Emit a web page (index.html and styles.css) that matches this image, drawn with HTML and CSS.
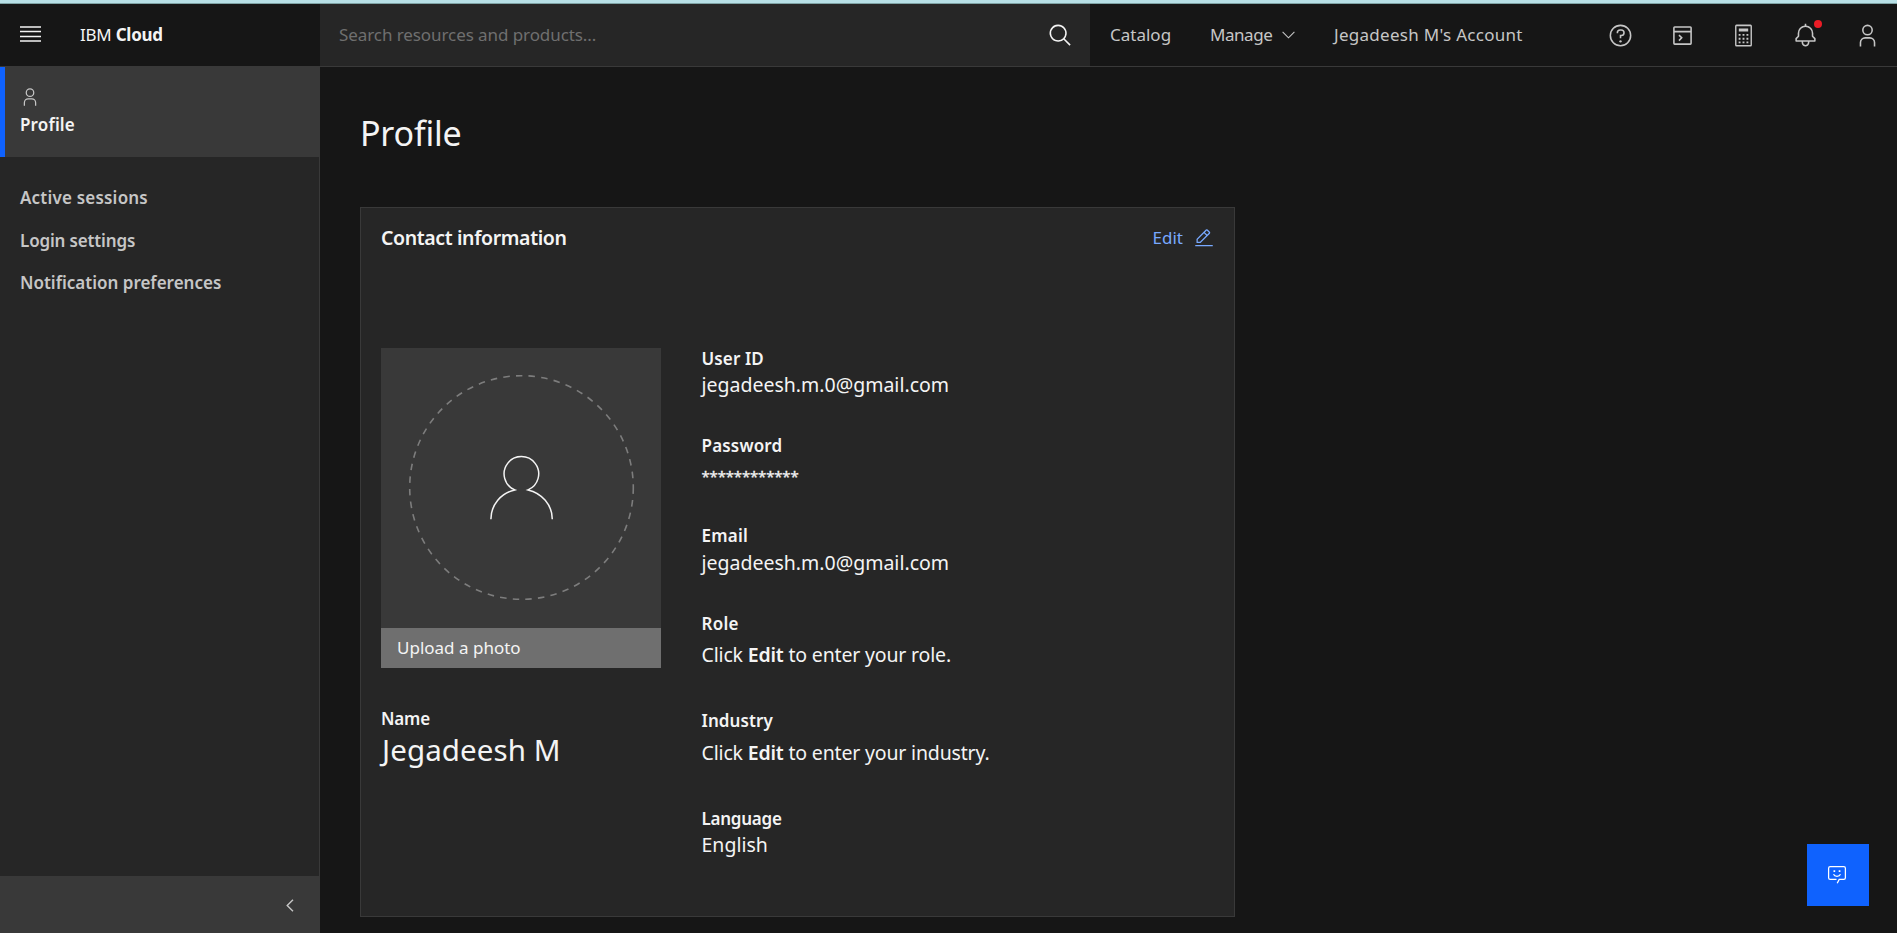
FILE: index.html
```html
<!DOCTYPE html>
<html lang="en">
<head>
<meta charset="utf-8">
<title>Profile - IBM Cloud</title>
<link rel="stylesheet" href="styles.css">
</head>
<body>
<div class="strip"></div>
<header class="header">
  <div class="brand">
    <svg class="menu-icon" width="21" height="16" viewBox="0 0 21 16"><path d="M0 1h21M0 5.500h21M0 10.500h21M0 15h21" stroke="#f4f4f4" stroke-width="1.300"/></svg>
    <span class="brand-name">IBM <b>Cloud</b></span>
  </div>
  <div class="search">
    <span class="search-text">Search resources and products...</span>
    <svg width="25" height="25" viewBox="0 0 32 32" fill="#f4f4f4"><path d="M29 27.586l-7.552-7.552a11.018 11.018 0 1 0-1.414 1.414L27.586 29zM4 13a9 9 0 1 1 9 9 9.010 9.010 0 0 1-9-9z"/></svg>
  </div>
  <nav class="topnav">
    <a class="catalog">Catalog</a>
    <a class="manage">Manage</a>
    <svg class="chev" width="13" height="8" viewBox="0 0 13 8" fill="none" stroke="#c6c6c6" stroke-width="1.100"><path d="M.6.8l5.900 6 5.900-6"/></svg>
    <a class="account">Jegadeesh M's Account</a>
  </nav>
  <div class="tools">
    <svg width="25" height="25" viewBox="0 0 32 32" fill="#c6c6c6"><path d="M16 2a14 14 0 1 0 14 14A14 14 0 0 0 16 2zm0 26a12 12 0 1 1 12-12 12 12 0 0 1-12 12z"/><circle cx="16" cy="23.500" r="1.500"/><path d="M17 8h-1.500a4.490 4.490 0 0 0-4.500 4.500v.5h2v-.5a2.500 2.500 0 0 1 2.500-2.500H17a2.500 2.500 0 0 1 0 5h-2v4.500h2V17a4.500 4.500 0 0 0 0-9z"/></svg>
    <svg width="25" height="25" viewBox="0 0 32 32" fill="#c6c6c6"><path d="M26 4.010H6a2 2 0 0 0-2 2v20a2 2 0 0 0 2 2h20a2 2 0 0 0 2-2v-20a2 2 0 0 0-2-2zm0 2v4H6v-4zm-20 20v-14h20v14z"/><path d="M10.760 16.180l2.820 2.830-2.820 2.830 1.410 1.410 4.240-4.240-4.240-4.240z"/></svg>
    <svg width="25" height="25" viewBox="0 0 32 32" fill="#c6c6c6"><path d="M26 4v24H6V4zm0-2H6a2 2 0 0 0-2 2v24a2 2 0 0 0 2 2h20a2 2 0 0 0 2-2V4a2 2 0 0 0-2-2z" transform="matrix(.9 0 0 1 1.600 0)"/><path d="M10 7h12v4H10zM9.800 14h2.400v2.400H9.800zM14.800 14h2.400v2.400h-2.400zM19.800 14h2.400v2.400h-2.400zM9.800 19h2.400v2.400H9.800zM14.800 19h2.400v2.400h-2.400zM19.800 19h2.400v2.400h-2.400zM9.800 23.600h2.400V26H9.800zM14.800 23.600h2.400V26h-2.400zM19.800 23.600h2.400V26h-2.400z"/></svg>
    <span class="bell">
      <svg width="25" height="25" viewBox="0 0 32 32" fill="#c6c6c6"><path d="M28.707 19.293L26 16.586V13a10.014 10.014 0 0 0-9-9.950V1h-2v2.050A10.014 10.014 0 0 0 6 13v3.586l-2.707 2.707A1 1 0 0 0 3 20v3a1 1 0 0 0 1 1h7v.777a5.152 5.152 0 0 0 4.500 5.199A5.006 5.006 0 0 0 21 25v-1h7a1 1 0 0 0 1-1v-3a1 1 0 0 0-.293-.707zM19 25a3 3 0 0 1-6 0v-1h6zm8-3H5v-1.586l2.707-2.707A1 1 0 0 0 8 17v-4a8 8 0 0 1 16 0v4a1 1 0 0 0 .293.707L27 20.414z"/></svg>
      <i class="dot"></i>
    </span>
    <svg width="25" height="25" viewBox="0 0 32 32" fill="#c6c6c6"><path d="M16 4a5 5 0 1 1-5 5 5 5 0 0 1 5-5m0-2a7 7 0 1 0 7 7 7 7 0 0 0-7-7zM26 30h-2v-5a5 5 0 0 0-5-5h-6a5 5 0 0 0-5 5v5H6v-5a7 7 0 0 1 7-7h6a7 7 0 0 1 7 7z"/></svg>
  </div>
</header>
<div class="shell">
  <aside class="side">
    <div class="side-active">
      <svg width="20" height="20" viewBox="0 0 32 32" fill="#c6c6c6"><path d="M16 4a5 5 0 1 1-5 5 5 5 0 0 1 5-5m0-2a7 7 0 1 0 7 7 7 7 0 0 0-7-7zM26 30h-2v-5a5 5 0 0 0-5-5h-6a5 5 0 0 0-5 5v5H6v-5a7 7 0 0 1 7-7h6a7 7 0 0 1 7 7z"/></svg>
      <span class="side-title">Profile</span>
    </div>
    <nav class="side-links">
      <a class="l1">Active sessions</a>
      <a class="l2">Login settings</a>
      <a class="l3">Notification preferences</a>
    </nav>
    <div class="collapse">
      <svg width="8" height="13" viewBox="0 0 8 13" fill="none" stroke="#c6c6c6" stroke-width="1.400"><path d="M7 .7L1.200 6.500 7 12.300"/></svg>
    </div>
  </aside>
  <main class="main">
    <h1 class="title">Profile</h1>
    <section class="card">
      <div class="card-head">
        <h2 class="card-title">Contact information</h2>
        <a class="edit"><span>Edit</span>
          <svg width="20" height="20" viewBox="0 0 32 32" fill="#78a9ff"><path d="M2 27h28v2H2zM25.410 9a2 2 0 0 0 0-2.830l-3.580-3.580a2 2 0 0 0-2.830 0l-15 15V24h6.410zm-5-5L24 7.590l-3 3L17.410 7zM6 22v-3.590l10-10L19.590 12l-10 10z"/></svg>
        </a>
      </div>
      <div class="card-body">
        <div class="left">
          <div class="photo">
            <svg width="280" height="280" viewBox="0 0 280 280" fill="none"><circle cx="140.500" cy="139.500" r="111.800" stroke="#7d7d7d" stroke-width="1.600" stroke-dasharray="6.500 6.200"/><path d="M109.900 171.200C109.900 156.500 120.200 145 133.800 141.900A17.300 17.300 0 1 1 147 141.900C160.600 145 171.300 156.500 171.300 171.200" stroke="#f4f4f4" stroke-width="1.500"/></svg>
          </div>
          <div class="upload"><span>Upload a photo</span></div>
          <div class="label name">Name</div>
          <div class="fullname">Jegadeesh M</div>
        </div>
        <div class="fields">
          <div class="field f1"><div class="label uid">User ID</div><div class="value mail">jegadeesh.m.0@gmail.com</div></div>
          <div class="field f2"><div class="label pw">Password</div><div class="stars">************</div></div>
          <div class="field f3"><div class="label em">Email</div><div class="value mail">jegadeesh.m.0@gmail.com</div></div>
          <div class="field f4"><div class="label role">Role</div><div class="value hint">Click <b>Edit</b> to enter your role.</div></div>
          <div class="field f5"><div class="label ind">Industry</div><div class="value hint">Click <b>Edit</b> to enter your industry.</div></div>
          <div class="field f6"><div class="label lang">Language</div><div class="value eng">English</div></div>
        </div>
      </div>
    </section>
  </main>
</div>
<button class="chat" aria-label="Chat">
  <svg width="20" height="20" viewBox="0 0 20 20" fill="none" stroke="#fff" stroke-width="1.250"><path d="M10.200 18.200l2-3.800h4.600c.9 0 1.600-.7 1.600-1.600V3.300c0-.9-.7-1.600-1.600-1.600H3.200c-.9 0-1.600.7-1.600 1.600v9.500c0 .9.700 1.600 1.600 1.600h6.300"/><path d="M6.500 9.200c.6 1.400 1.800 2.100 3.500 2.100s2.900-.7 3.500-2.100"/><path d="M6.500 5.200h1.700v1.700H6.500zM11.700 5.200h1.700v1.700h-1.700z" fill="#fff" stroke="none"/></svg>
</button>
</body>
</html>
```

FILE: styles.css
```css
* { box-sizing: border-box; }
body {
  margin: 0;
  height: 933px;
  display: flex;
  flex-direction: column;
  overflow: hidden;
  background: #161616;
  color: #f4f4f4;
  font-family: "Noto Sans", "Open Sans", sans-serif;
  font-size: 17px;
  white-space: nowrap;
}
svg { display: block; flex: none; }
h1, h2 { margin: 0; font-weight: 400; }
b { font-weight: 600; }

.strip { height: 4px; flex: none; background: #b8e0e6; border-bottom: 1px solid #7fa3a5; }
.header { height: 63px; flex: none; display: flex; border-bottom: 1px solid #393939; }
.brand { width: 320px; display: flex; align-items: center; padding: 0 0 2px 20px; }
.brand-name { margin-left: 39px; letter-spacing: -0.250px; }
.brand-name b { font-weight: 700; }
.search { width: 770px; display: flex; align-items: center; justify-content: space-between; padding: 0 17px 0 19px; background: #262626; }
.search-text { color: #6f6f6f; padding-bottom: 2px; letter-spacing: -0.080px; }
.topnav { width: 512px; display: flex; align-items: center; padding-left: 20px; color: #c6c6c6; }
.topnav a { flex: none; padding-bottom: 2px; }
.catalog { width: 100px; }
.manage { width: 72px; letter-spacing: -0.450px; }
.chev { margin-right: 39px; }
.account { letter-spacing: 0.280px; }
.tools { display: flex; align-items: center; gap: 36.700px; padding-left: 6px; }
.bell { position: relative; flex: none; }
.dot { position: absolute; right: -4px; top: -3px; width: 8px; height: 8px; border-radius: 50%; background: #eb1c26; }

.shell { flex: 1; display: flex; min-height: 0; }
.side { width: 320px; display: flex; flex-direction: column; background: #262626; border-right: 1px solid #393939; font-weight: 600; }
.side-active { height: 90px; flex: none; padding: 20px 0 0 15px; border-left: 5px solid #0f62fe; background: #393939; margin-right: -1px; }
.side-title { display: block; margin-top: 7px; line-height: 22px; letter-spacing: 0.150px; }
.side-links { display: flex; flex-direction: column; gap: 20.500px; padding: 30px 0 0 20px; color: #c6c6c6; line-height: 22px; }
.l1 { letter-spacing: 0.200px; }
.l2 { letter-spacing: -0.150px; }
.collapse { height: 57px; margin: auto -1px 0 0; display: flex; justify-content: flex-end; align-items: center; padding-right: 26px; padding-top: 2px; background: #393939; }

.main { flex: 1; padding: 42px 0 0 40px; }
.title { font-size: 34px; line-height: 48px; letter-spacing: -0.200px; }
.card { width: 875px; height: 710px; margin-top: 50px; padding: 0 20px; background: #262626; border: 1px solid #393939; }
.card-head { height: 140px; padding-top: 17px; display: flex; justify-content: space-between; align-items: flex-start; }
.card-title { font-size: 19.500px; font-weight: 600; line-height: 26px; letter-spacing: -0.380px; }
.edit { display: flex; gap: 11px; align-items: center; line-height: 26px; color: #78a9ff; }
.card-body { display: flex; gap: 40px; }
.left { width: 280px; }
.photo { height: 280px; background: #393939; }
.upload { height: 40px; display: flex; align-items: center; padding: 0 0 2px 16px; background: #6f6f6f; }
.label { font-weight: 600; line-height: 22px; }
.name { margin-top: 40px; letter-spacing: -0.200px; }
.fullname { margin: 2px 0 0 1px; font-size: 29.500px; line-height: 36px; letter-spacing: 0.100px; }
.fields { flex: 1; padding-left: 0.500px; }
.value { font-size: 19.500px; line-height: 26px; margin-top: 2px; }
.f1 { height: 87px; }
.f2 { height: 90px; }
.f3 { height: 88px; }
.f4 { height: 97px; }
.f5 { height: 98px; }
.f3 .value { margin-top: 3px; }
.f4 .value { margin-top: 7px; }
.f5 .value { margin-top: 8px; }
.hint { letter-spacing: -0.170px; }
.uid { letter-spacing: 0.120px; }
.pw { letter-spacing: 0.180px; }
.em, .role { letter-spacing: 0.250px; }
.ind { letter-spacing: 0.100px; }
.lang { letter-spacing: -0.250px; }
.stars { font-size: 15px; line-height: 22px; margin-top: 8px; letter-spacing: -0.180px; -webkit-text-stroke: 0.300px #f4f4f4; }

.chat { position: fixed; left: 1807px; top: 844px; width: 62px; height: 62px; padding: 0 2px 0 0; border: 0; background: #0f62fe; display: flex; align-items: center; justify-content: center; }
```
